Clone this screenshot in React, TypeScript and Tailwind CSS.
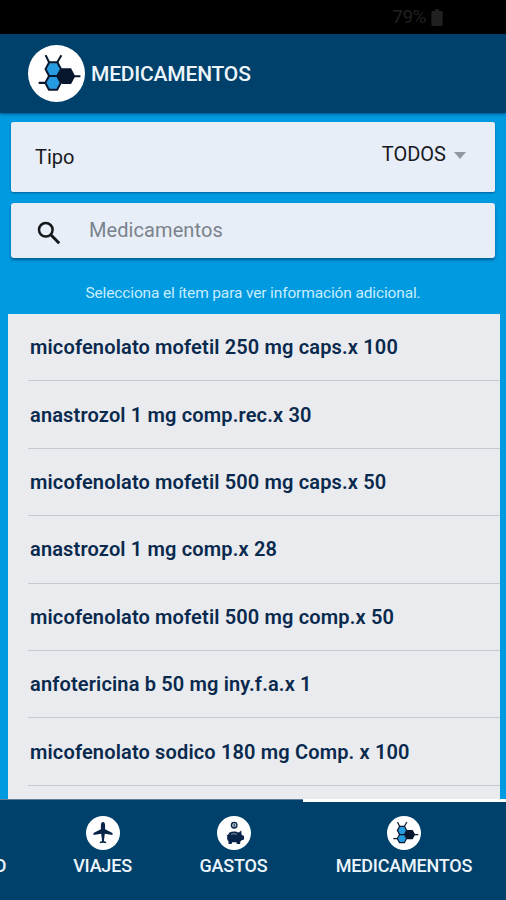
import type { ReactNode } from "react"
import clsx from "clsx"

const medications = [
  "micofenolato mofetil 250 mg caps.x 100",
  "anastrozol 1 mg comp.rec.x 30",
  "micofenolato mofetil 500 mg caps.x 50",
  "anastrozol 1 mg comp.x 28",
  "micofenolato mofetil 500 mg comp.x 50",
  "anfotericina b 50 mg iny.f.a.x 1",
  "micofenolato sodico 180 mg Comp. x 100",
]

function MoleculeIcon({ className }: { className?: string }) {
  return (
    <svg viewBox="0 0 56 56" className={className} stroke="#08172d" strokeWidth="2">
      <path d="M20.700 17 17.300 10M28.800 17l4-7M10.500 37.200h8M45 30.600h6.500" fill="none" />
      <path d="m17.200 23.700 3.600-6.700h8l3.600 6.700-3.600 6.800h-8z" fill="#279be0" />
      <path d="m17 37.200 3.600-6.700h8l3.600 6.700-3.600 6.800h-8z" fill="#279be0" />
      <path d="m30.300 30.600 3.600-6.700h7.800l3.600 6.700-3.600 6.700h-7.800z" fill="#08172d" />
    </svg>
  )
}

function PlaneIcon() {
  return (
    <svg viewBox="0 0 34 34" className="size-[34px]" fill="#082449">
      <path d="M17 6c-1.400 0-2.100 1.500-2.100 3.200v4L7.500 17v2l7.700-1.300.9 7.300-2.300 1v1.200l3.200-.5 3.200.5V26l-2.300-1 .9-7.300 7.700 1.300v-2l-7.400-3.800v-4C19.100 7.500 18.400 6 17 6Z" />
    </svg>
  )
}

function PiggyIcon() {
  return (
    <svg viewBox="0 0 34 34" className="size-[34px]" fill="#082449">
      <circle cx="17.2" cy="9.2" r="2.800" fill="#b9c5cf" stroke="#082449" strokeWidth="1.3" />
      <path d="M17.200 7.700v3" stroke="#082449" />
      <path d="M12.500 16.500c2.500-1.400 6.800-1.400 9.100.1l2.800-2v3.300l1.100 1.700 1.500.2v3.700l-2.300.7-1.500 1.500V28h-3.300l-.6-1.700h-4.100l-.7 1.700h-3v-2.700c-1.400-1.200-1.600-2.800-1.200-4.700l-.6-1.800 1.400.2c.3-1 .7-1.800 1.400-2.500Z" />
      <path d="M14 18.200q3-1 6 0" fill="none" stroke="#9faebc" strokeWidth=".8" />
    </svg>
  )
}

type TabProps = { icon: ReactNode; label: string; className?: string }

function Tab({ icon, label, className }: TabProps) {
  return (
    <div className={clsx("flex shrink-0 flex-col items-center pt-4", className)}>
      <div className="flex size-[34px] items-center justify-center rounded-full bg-white">{icon}</div>
      <span className="mt-[6px] text-[18px] leading-5 font-medium tracking-[-0.2px] whitespace-nowrap">
        {label}
      </span>
    </div>
  )
}

export default function App() {
  return (
    <div className="flex h-[900px] w-[506px] flex-col overflow-hidden bg-[#009ae1] font-['Roboto',sans-serif]">
      <div className="flex h-[34px] shrink-0 items-center justify-end gap-[5px] bg-black pr-[63px] text-[#202020]">
        <span className="text-[19px] leading-5 tracking-[-0.5px]">79%</span>
        <svg viewBox="0 0 12 18" className="h-[17px] w-3" fill="currentColor">
          <path d="M4 0h4v2h2.500c.8 0 1.500.7 1.500 1.500v13c0 .8-.7 1.500-1.500 1.500h-9C.7 18 0 17.300 0 16.500v-13C0 2.700.7 2 1.500 2H4z" />
        </svg>
      </div>

      <header className="z-10 flex h-[79px] shrink-0 items-center gap-[6px] bg-[#00416b] pl-[28px] text-[#edf5fc] shadow-[0_1px_3px_rgba(0,30,60,0.6)]">
        <div className="size-[57px] rounded-full bg-white">
          <MoleculeIcon className="size-[57px]" />
        </div>
        <h1 className="text-[21px] leading-6 font-medium tracking-[-0.2px]">MEDICAMENTOS</h1>
      </header>

      <div className="mx-[11px] mt-[9px] flex h-[70px] shrink-0 items-center justify-between rounded-[2px] bg-[#e7eef8] pr-[29px] pl-6 text-xl text-[#17191d] shadow-[0_1px_2px_rgba(0,40,80,0.5)]">
        <span>Tipo</span>
        <div className="mb-[6px] flex items-center gap-2">
          <span>TODOS</span>
          <div className="mt-0.5 border-x-[6.5px] border-t-[7px] border-x-transparent border-t-[#9298a2]" />
        </div>
      </div>

      <div className="mx-[11px] mt-[11px] flex h-[55px] shrink-0 items-center rounded-[3px] bg-[#e7eef8] pl-[26px] shadow-[0_2px_3px_rgba(0,40,80,0.55)]">
        <svg viewBox="0 0 24 24" className="mt-1 size-[24px]" fill="none" stroke="#15171b" strokeWidth="2.500">
          <circle cx="8.800" cy="8.800" r="6.800" />
          <path d="m13.800 13.800 8.400 8.400" strokeWidth="3" />
        </svg>
        <span className="mb-[2px] ml-7 text-xl tracking-[0.08px] text-[#7b828c]">Medicamentos</span>
      </div>

      <p className="h-[56px] shrink-0 pt-[25px] text-center text-[15.5px] leading-5 tracking-[-0.14px] text-[#c8edff]">
        Selecciona el ítem para ver información adicional.
      </p>

      <main className="mr-[6px] ml-[8px] min-h-0 flex-1 overflow-hidden bg-[#e9ebef]">
        {medications.map((name) => (
          <div
            key={name}
            className="ml-5 flex h-[67.4px] items-center border-b border-[#c6c9cd] pl-0.5 text-xl font-semibold tracking-[0.15px] whitespace-nowrap text-[#09294d]"
          >
            {name}
          </div>
        ))}
      </main>

      <nav className="relative flex h-[101px] shrink-0 justify-end border-t border-[#5f7f98] bg-[#00416b] text-[#edf5fc]">
        {/* Tail of the tab that is scrolled off to the left */}
        <div className="mr-auto -ml-[6px] pt-[56px] text-[18px] leading-5 font-medium">O</div>
        <Tab icon={<PlaneIcon />} label="VIAJES" className="w-[131px]" />
        <Tab icon={<PiggyIcon />} label="GASTOS" className="w-[131px]" />
        <Tab
          icon={<MoleculeIcon className="size-[34px]" />}
          label="MEDICAMENTOS"
          className="ml-[3px] w-[204px]"
        />
        <div className="absolute -top-px right-0 h-[3px] w-[203px] bg-white" />
      </nav>
    </div>
  )
}
